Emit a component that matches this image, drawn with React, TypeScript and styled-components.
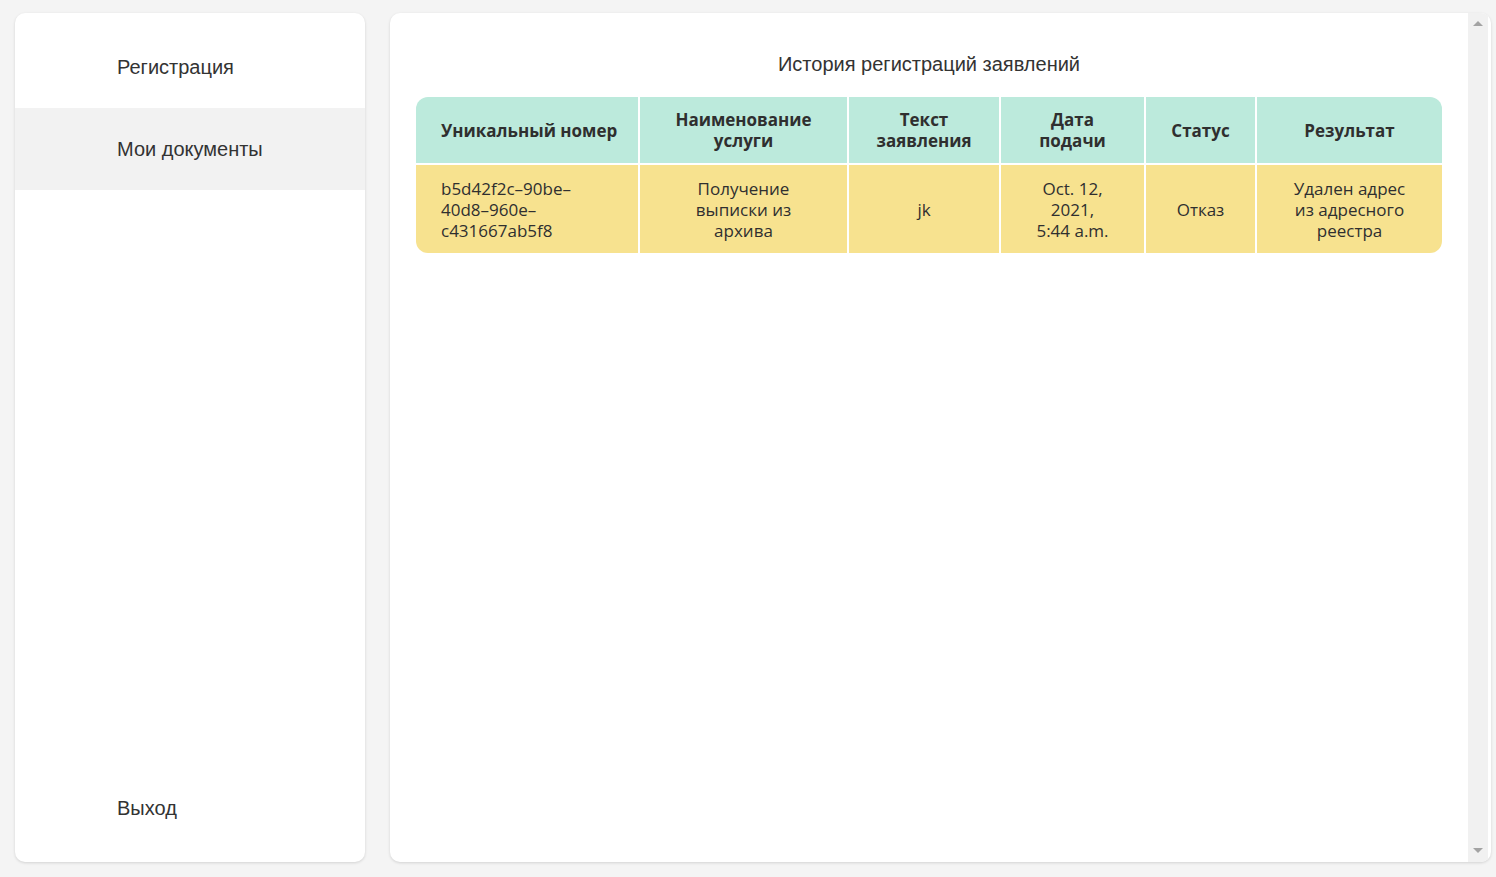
import React from "react";
import styled, { createGlobalStyle } from "styled-components";

const GlobalStyle = createGlobalStyle`
  * { box-sizing: border-box; }
  html, body { margin: 0; padding: 0; background: #f4f4f4; }
  body { font-family: "Liberation Sans", Arial, sans-serif; color: #333; }
`;

const Page = styled.div`
  display: flex;
  gap: 25px;
  height: 877px;
  padding: 13px 5px 15px 15px;
`;

const Sidebar = styled.nav`
  width: 350px;
  flex-shrink: 0;
  background: #fff;
  border-radius: 10px;
  box-shadow: 0 1px 3px rgba(0, 0, 0, 0.14);
  display: flex;
  flex-direction: column;
  padding: 13px 0;
`;

const NavItem = styled.div<{ $active?: boolean; $bottom?: boolean }>`
  height: 82px;
  display: flex;
  align-items: center;
  padding-left: 102px;
  font-size: 20px;
  color: #333;
  background: ${(p) => (p.$active ? "#f2f2f2" : "transparent")};
  margin-top: ${(p) => (p.$bottom ? "auto" : "0")};
  cursor: pointer;
`;

const Main = styled.main`
  flex: 1;
  display: flex;
  background: #fff;
  border-radius: 10px;
  box-shadow: 0 1px 3px rgba(0, 0, 0, 0.14);
  overflow: hidden;
  padding-right: 3px;
`;

const Content = styled.div`
  flex: 1;
  min-width: 0;
  padding: 40px 26px 0 26px;
`;

const ScrollTrack = styled.div`
  width: 20px;
  flex-shrink: 0;
  background: #f1f1f1;
  display: flex;
  flex-direction: column;
  justify-content: space-between;
  align-items: center;
  padding: 8px 0 9px;
`;

const Arrow = styled.span<{ $down?: boolean }>`
  width: 0;
  height: 0;
  border-left: 5px solid transparent;
  border-right: 5px solid transparent;
  ${(p) =>
    p.$down ? "border-top: 5px solid #a3a3a3;" : "border-bottom: 5px solid #a3a3a3;"}
`;

const Title = styled.h1`
  margin: 0 0 21px;
  font-size: 20px;
  font-weight: 400;
  line-height: 23px;
  text-align: center;
  color: #333;
`;

const TableWrap = styled.div`
  border-radius: 12px;
  overflow: hidden;
`;

const Table = styled.table`
  width: 100%;
  table-layout: fixed;
  border-collapse: separate;
  border-spacing: 0;
  font-family: "Open Sans", Lato, sans-serif;
  font-size: 17px;
  line-height: 21px;
  color: #2f2f2f;
`;

const Th = styled.th<{ $left?: boolean }>`
  background: #bceadc;
  font-weight: 700;
  padding: 12px 20px;
  height: 67px;
  text-align: ${(p) => (p.$left ? "left" : "center")};
  border-right: 2px solid #fff;
  border-bottom: 2px solid #fff;
  white-space: nowrap;
  &:first-child { padding-left: 25px; }
  &:last-child { border-right: none; }
`;

const Td = styled.td<{ $left?: boolean }>`
  background: #f7e28f;
  padding: 12px 10px;
  height: 88px;
  text-align: ${(p) => (p.$left ? "left" : "center")};
  border-right: 2px solid #fff;
  vertical-align: middle;
  white-space: nowrap;
  &:first-child { padding-left: 25px; }
  &:last-child { border-right: none; }
`;

const cols = [224, 209, 152, 145, 111, 185];

const Lines = ({ lines }: { lines: string[] }) => (
  <>
    {lines.map((l, i) => (
      <React.Fragment key={i}>
        {i > 0 && <br />}
        {l}
      </React.Fragment>
    ))}
  </>
);

export default function App() {
  return (
    <>
      <GlobalStyle />
      <Page>
        <Sidebar>
          <NavItem>Регистрация</NavItem>
          <NavItem $active>Мои документы</NavItem>
          <NavItem $bottom>Выход</NavItem>
        </Sidebar>
        <Main>
          <Content>
            <Title>История регистраций заявлений</Title>
            <TableWrap>
              <Table>
                <colgroup>
                  {cols.map((w, i) => (
                    <col key={i} style={{ width: w }} />
                  ))}
                </colgroup>
                <thead>
                  <tr>
                    <Th $left>Уникальный номер</Th>
                    <Th><Lines lines={["Наименование", "услуги"]} /></Th>
                    <Th><Lines lines={["Текст", "заявления"]} /></Th>
                    <Th><Lines lines={["Дата", "подачи"]} /></Th>
                    <Th>Статус</Th>
                    <Th>Результат</Th>
                  </tr>
                </thead>
                <tbody>
                  <tr>
                    <Td $left><Lines lines={["b5d42f2c–90be–", "40d8–960e–", "c431667ab5f8"]} /></Td>
                    <Td><Lines lines={["Получение", "выписки из", "архива"]} /></Td>
                    <Td>jk</Td>
                    <Td><Lines lines={["Oct. 12,", "2021,", "5:44 a.m."]} /></Td>
                    <Td>Отказ</Td>
                    <Td><Lines lines={["Удален адрес", "из адресного", "реестра"]} /></Td>
                  </tr>
                </tbody>
              </Table>
            </TableWrap>
          </Content>
          <ScrollTrack>
            <Arrow />
            <Arrow $down />
          </ScrollTrack>
        </Main>
      </Page>
    </>
  );
}
